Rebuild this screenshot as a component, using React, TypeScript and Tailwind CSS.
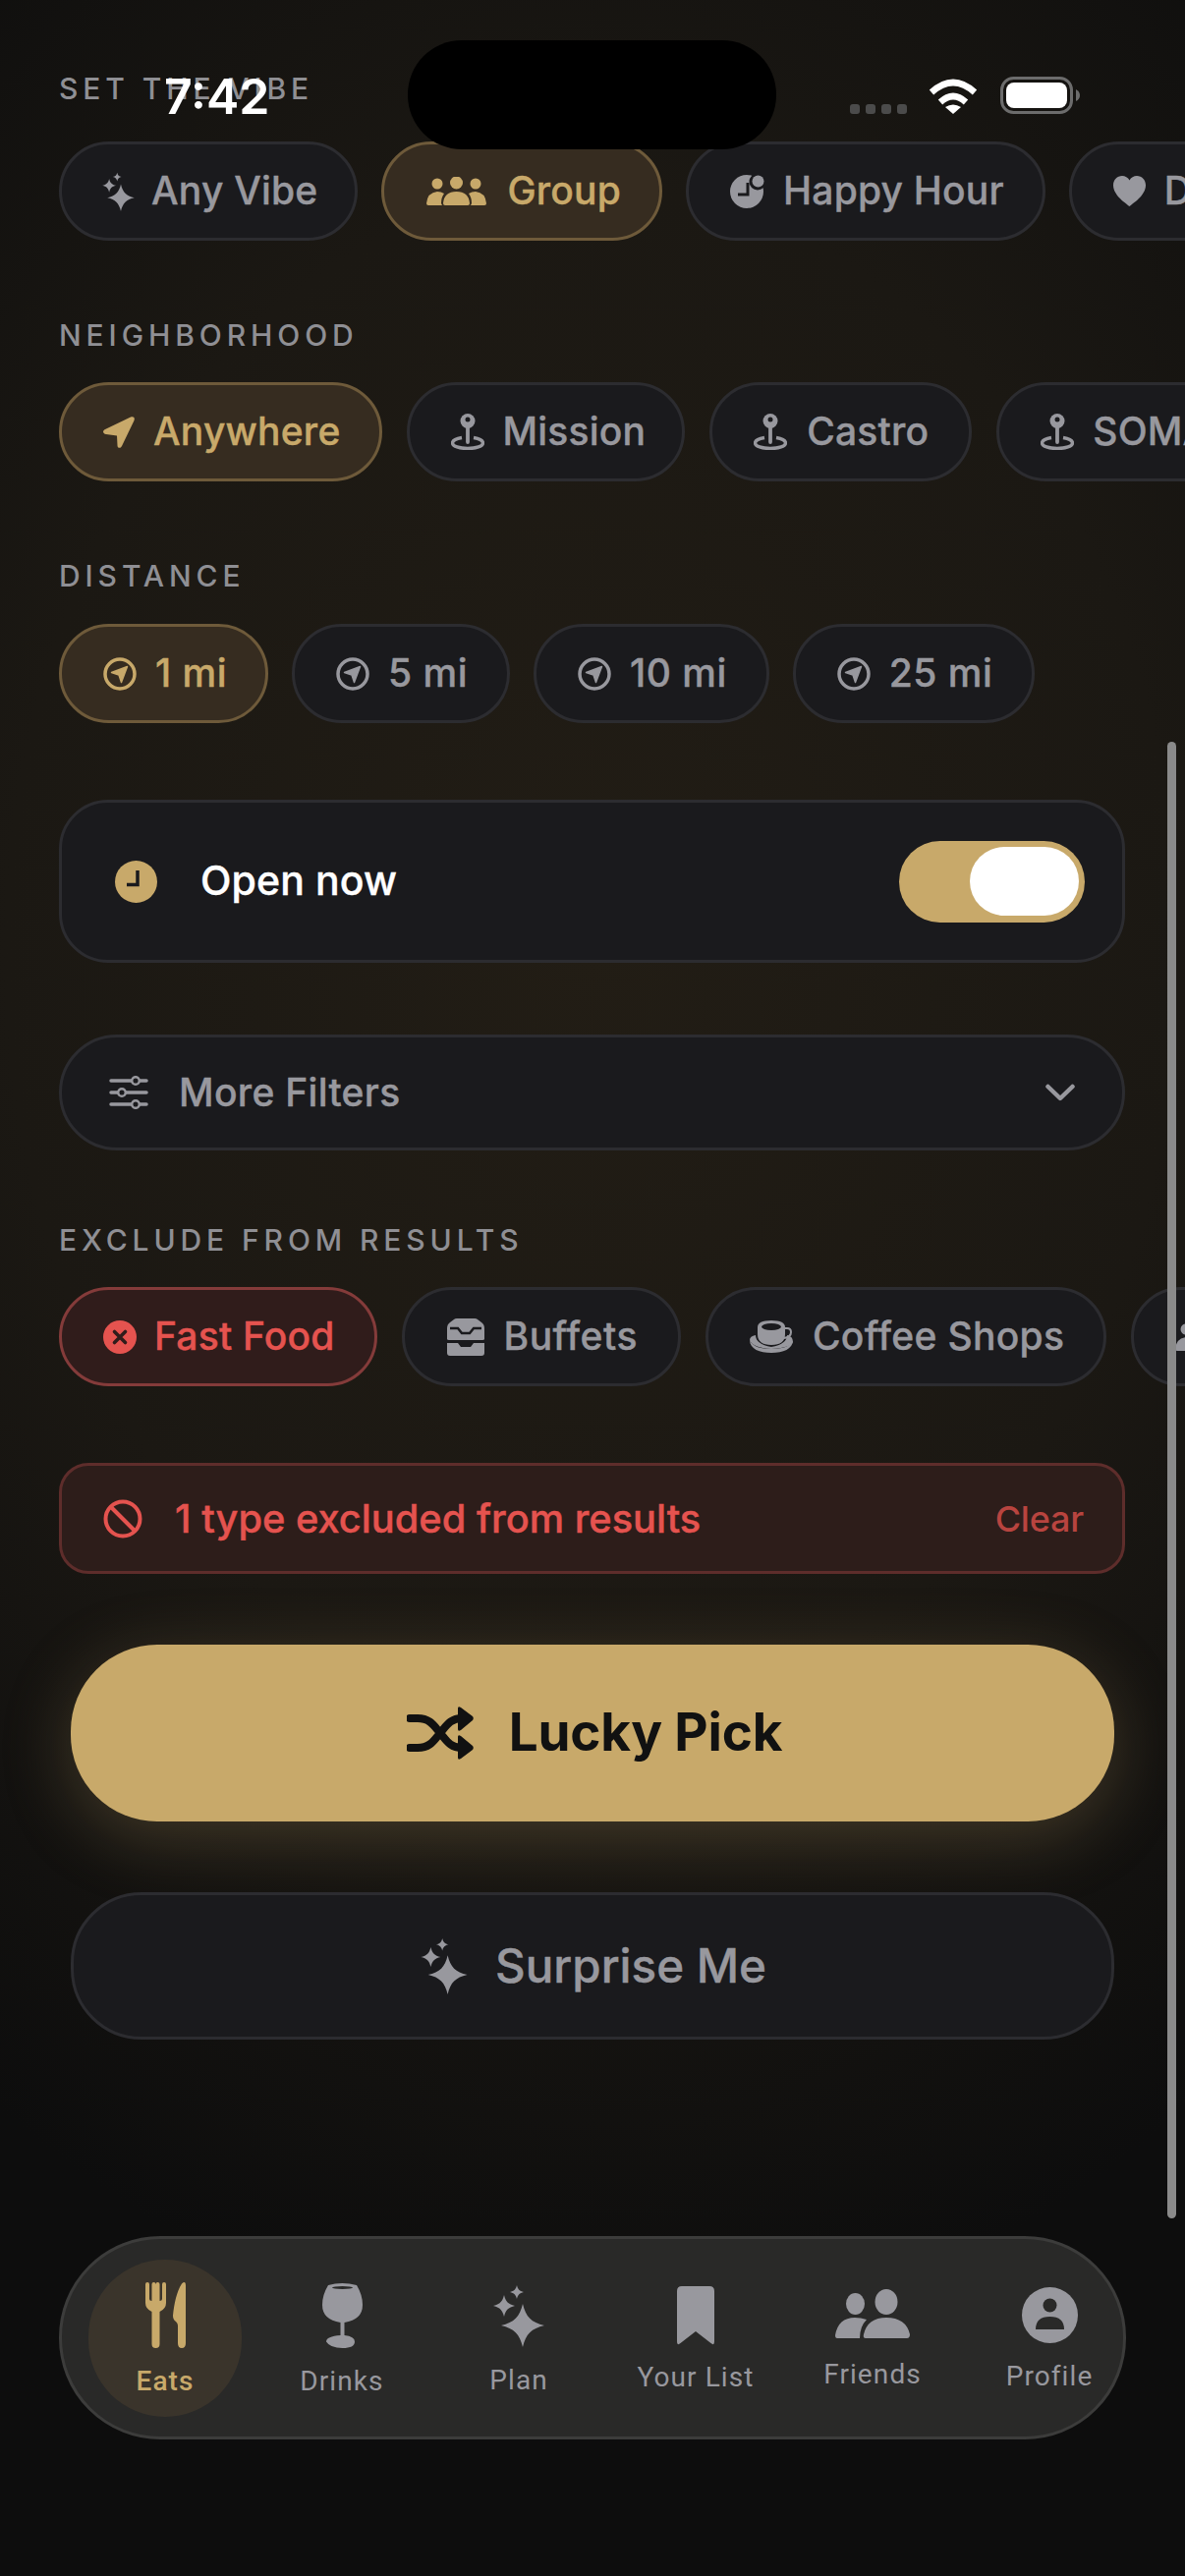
import React from "react";

const star = (cx: number, cy: number, r: number) =>
  `M${cx} ${cy - r}C${cx + r * 0.14} ${cy - r * 0.4} ${cx + r * 0.4} ${cy - r * 0.14} ${cx + r} ${cy}C${cx + r * 0.4} ${cy + r * 0.14} ${cx + r * 0.14} ${cy + r * 0.4} ${cx} ${cy + r}C${cx - r * 0.14} ${cy + r * 0.4} ${cx - r * 0.4} ${cy + r * 0.14} ${cx - r} ${cy}C${cx - r * 0.4} ${cy - r * 0.14} ${cx - r * 0.14} ${cy - r * 0.4} ${cx} ${cy - r}Z`;

type P = { className?: string };

const Sparkles = ({ className }: P) => (
  <svg viewBox="0 0 52 64" className={className} fill="currentColor">
    <path d={star(30, 42, 22)} />
    <path d={star(11, 22, 11)} />
    <path d={star(24, 8, 7)} />
  </svg>
);
const Group = ({ className }: P) => (
  <svg viewBox="0 0 61 29" className={className} fill="currentColor">
    <circle cx="11" cy="7" r="5.5" />
    <circle cx="30.5" cy="6" r="6.5" />
    <circle cx="50" cy="7" r="5.5" />
    <path d="M16 29H2Q0 29 0 27Q1 16 11 15Q15 15 18 17Q15 21 15 27Z" />
    <path d="M45 29H59Q61 29 61 27Q60 16 50 15Q46 15 43 17Q46 21 46 27Z" />
    <path d="M19 29Q17 29 17 27Q18 15 30.5 15Q43 15 44 27Q44 29 42 29Z" />
  </svg>
);
const HappyHour = ({ className }: P) => (
  <svg viewBox="0 0 36 34" className={className} fill="currentColor">
    <circle cx="17" cy="17" r="17" />
    <circle cx="28" cy="7" r="8.5" fill="#1a1a1d" />
    <circle cx="28.5" cy="6.5" r="6" />
    <path d="M18 8V20H8" fill="none" stroke="#1a1a1d" strokeWidth="3" />
  </svg>
);
const Heart = ({ className }: P) => (
  <svg viewBox="0 0 33 31" className={className} fill="currentColor">
    <path d="M16.5 31C13 28 0 20 0 9.5C0 4 4 0 9 0C12 0 15 1.500 16.500 4.500C18 1.500 21 0 24 0C29 0 33 4 33 9.500C33 20 20 28 16.500 31Z" />
  </svg>
);
const Arrow = ({ className }: P) => (
  <svg viewBox="0 0 32 32" className={className} fill="currentColor">
    <path d="M28 .5C31 -.5 32.500 1 31.500 4L19 30C17.500 33 14.500 32 14.500 29.500L14 19.500L3 18C-.5 17.500 -1 14.500 2 13Z" />
  </svg>
);
const Pin = ({ className }: P) => (
  <svg viewBox="0 0 34 37" className={className} fill="none">
    <path d="M11 24.500C5 25.500 1.500 27.500 1.500 30C1.500 33.200 8.500 35.500 17 35.500C25.500 35.500 32.500 33.200 32.500 30C32.500 27.500 29 25.500 23 24.500" stroke="currentColor" strokeWidth="3.400" />
    <path d="M17 10V29" stroke="currentColor" strokeWidth="3.800" strokeLinecap="round" />
    <circle cx="17" cy="7.500" r="7.500" fill="currentColor" />
    <circle cx="17" cy="6" r="2.500" fill="#1a1a1d" />
  </svg>
);
const CircleArrow = ({ className }: P) => (
  <svg viewBox="0 0 34 34" className={className} fill="none">
    <circle cx="17" cy="17" r="15" stroke="currentColor" strokeWidth="3.500" />
    <path d="M24.500 9.500L18.500 25.500L16 18L8.500 15.500Z" fill="currentColor" stroke="currentColor" strokeWidth="1.500" strokeLinejoin="round" />
  </svg>
);
const Clock = ({ className }: P) => (
  <svg viewBox="0 0 43 43" className={className}>
    <circle cx="21.500" cy="21.500" r="21.500" fill="currentColor" />
    <path d="M23 10V24.500H12" fill="none" stroke="#1a1a1d" strokeWidth="3.500" />
  </svg>
);
const Sliders = ({ className }: P) => (
  <svg viewBox="0 0 40 34" className={className} fill="none" stroke="currentColor">
    <path d="M2 5H38M2 17H38M2 29H38" strokeWidth="3.500" strokeLinecap="round" />
    <circle cx="27" cy="5" r="3.800" fill="#1a1a1d" strokeWidth="2.500" />
    <circle cx="13" cy="17" r="3.800" fill="#1a1a1d" strokeWidth="2.500" />
    <circle cx="27" cy="29" r="3.800" fill="#1a1a1d" strokeWidth="2.500" />
  </svg>
);
const Chevron = ({ className }: P) => (
  <svg viewBox="0 0 30 18" className={className} fill="none" stroke="currentColor" strokeWidth="4.500" strokeLinecap="round" strokeLinejoin="round">
    <path d="M2.500 3L15 15L27.500 3" />
  </svg>
);
const XCircle = ({ className }: P) => (
  <svg viewBox="0 0 34 34" className={className}>
    <circle cx="17" cy="17" r="17" fill="currentColor" />
    <path d="M11.500 11.500L22.500 22.500M22.500 11.500L11.500 22.500" stroke="#301c1b" strokeWidth="3.600" strokeLinecap="round" />
  </svg>
);
const Buffet = ({ className }: P) => (
  <svg viewBox="0 0 38 38" className={className} fill="currentColor">
    <path d="M0 21V10Q0 6 3 4L7 1Q8 0 10 0H28Q30 0 31 1L35 4Q38 6 38 10V21Q38 22 36 22H2Q0 22 0 21Z" />
    <path d="M3 10H11L15 15H23L27 10H35" fill="none" stroke="#1a1a1d" strokeWidth="2.500" />
    <path d="M0 25H11L14 29H24L27 25H38V35Q38 38 35 38H3Q0 38 0 35Z" />
  </svg>
);
const Coffee = ({ className }: P) => (
  <svg viewBox="0 0 44 33" className={className} fill="currentColor">
    <path d="M0 20C3 27 12 29 22 29C32 29 41 27 44 20C44 29 34 33 22 33C10 33 0 29 0 20Z" />
    <path d="M0 20Q0 16 6 15Q6 24 22 27Q38 24 38 15Q44 16 44 22Q41 28 22 29Q3 28 0 20Z" />
    <path d="M8 7Q8 0 22 0Q36 0 36 7V14Q36 25 22 25Q8 25 8 14Z" />
    <ellipse cx="22" cy="6.500" rx="10" ry="3.500" fill="#1a1a1d" />
    <path d="M36 8H38Q42 8 42 12Q42 17 35 18" fill="none" stroke="currentColor" strokeWidth="2" />
  </svg>
);
const Ban = ({ className }: P) => (
  <svg viewBox="0 0 40 40" className={className} fill="none" stroke="currentColor" strokeWidth="4">
    <circle cx="20" cy="20" r="17.500" />
    <path d="M8 8L32 32" />
  </svg>
);
const Shuffle = ({ className }: P) => (
  <svg viewBox="0 0 68 54" className={className}>
    <path d="M3 12H11C24 12 28 20 34 27C40 34 44 42 56 42M3 42H11C24 42 28 34 34 27C40 20 44 12 56 12" fill="none" stroke="currentColor" strokeWidth="8" strokeLinecap="round" />
    <path d="M52 2Q52 -1 55 1L67 10Q68.500 12 67 14L55 24Q52 26 52 23ZM52 31Q52 28 55 30L67 40Q68.500 42 67 44L55 53Q52 55 52 52Z" fill="currentColor" />
  </svg>
);
const ForkKnife = ({ className }: P) => (
  <svg viewBox="0 0 41 67" className={className} fill="currentColor">
    <path d="M0 2Q0 0 2 0T4 2V17Q4 19 6.500 19V2Q6.500 0 8.500 0T10.500 2V19Q10.500 19 10.500 19V2Q10.500 0 12.500 0T14.500 2V19Q17 19 17 17V2Q17 0 19 0T21 2V21Q21 27 14.500 30V63Q14.500 67 10.500 67T6.500 63V30Q0 27 0 21Z" />
    <path d="M41 3V62Q41 67 37 67T33 62V44Q33 42 31 40Q28 38 28 34C29 22 32 9 37 1.500Q41 -2 41 3Z" />
  </svg>
);
const Wine = ({ className }: P) => (
  <svg viewBox="0 0 41 67" className={className} fill="currentColor">
    <path d="M6 3Q20 -1 35 3Q41 13 41 23Q41 38 22.500 41V54Q33 55 33 60.500Q33 67 20.500 67Q8 67 4 60.500Q4 55 18.500 54V41Q0 38 0 23Q0 13 6 3Z" />
    <ellipse cx="20.500" cy="5.500" rx="10.500" ry="1.500" fill="#292928" />
  </svg>
);
const Bookmark = ({ className }: P) => (
  <svg viewBox="0 0 38 60" className={className} fill="currentColor">
    <path d="M5 0H33Q38 0 38 5V56Q38 61 34.500 58L19 46L3.500 58Q0 61 0 56V5Q0 0 5 0Z" />
  </svg>
);
const Friends = ({ className }: P) => (
  <svg viewBox="0 0 76 50" className={className} fill="currentColor">
    <ellipse cx="20.500" cy="15" rx="9.500" ry="11" />
    <ellipse cx="52" cy="13" rx="11.500" ry="13" />
    <path d="M2 50Q0 50 0 47Q3 29 20 29Q26 29 32 31Q25 38 25 50Z" />
    <path d="M31 50Q28 50 29 46Q33 29 52 29Q72 29 76 46Q76 50 73 50Z" />
  </svg>
);
const Profile = ({ className }: P) => (
  <svg viewBox="0 0 57 57" className={className}>
    <circle cx="28.500" cy="28.500" r="28.500" fill="currentColor" />
    <circle cx="28.500" cy="18.500" r="7" fill="#292928" />
    <path d="M14 43Q14 30 28.500 30Q43 30 43 43Z" fill="#292928" />
  </svg>
);

type Tone = "idle" | "gold" | "red";
const tones: Record<Tone, string> = {
  idle: "bg-[#1a1a1d] border-[#2c2c30] text-[#98989e]",
  gold: "bg-[#362c20] border-[#6e5a3a] text-[#c8a96a]",
  red: "bg-[#301c1b] border-[#843b3a] text-[#e5534f]",
};

function Chip({
  icon,
  label,
  tone = "idle",
  extra = "pl-[42px] pr-[40px] gap-[19px]",
  track = "tracking-[0.2px]",
}: {
  icon: React.ReactNode;
  label: string;
  tone?: Tone;
  extra?: string;
  track?: string;
}) {
  return (
    <div className={`flex h-[101px] shrink-0 items-center rounded-full border-[3px] text-[39px] font-medium [-webkit-text-stroke:0.4px_currentColor] ${track} ${extra} ${tones[tone]}`}>
      {icon}
      <span className="whitespace-nowrap">{label}</span>
    </div>
  );
}

function Label({ children, className = "" }: { children: React.ReactNode; className?: string }) {
  return <div className={`h-[30px] text-[30px] font-medium uppercase leading-[30px] tracking-[4.9px] text-[#8f8f94] ${className}`}>{children}</div>;
}

function Tab({ icon, label, active, pt, mt }: { icon: React.ReactNode; label: string; active?: boolean; pt: string; mt: string }) {
  return (
    <div className={`relative flex flex-col items-center ${pt} ${active ? "text-[#c8a96a]" : "text-[#98989e]"}`}>
      {active && <div className="absolute left-[12px] top-[21px] h-[160px] w-[156px] rounded-full bg-[#3a342b]" />}
      <div className="relative">{icon}</div>
      <div className={`relative whitespace-nowrap text-[28px] leading-[32px] tracking-[1.1px] [font-family:Roboto,sans-serif] ${active ? "font-medium" : "font-normal"} ${mt}`}>{label}</div>
    </div>
  );
}

export default function App() {
  const num = "tracking-[0.5px]";
  return (
    <div className="relative h-[2622px] w-[1206px] overflow-hidden bg-[#0d0d0d] bg-[radial-gradient(ellipse_90%_54%_at_50%_37%,#221d15_0%,#1b1813_55%,#0d0d0d_100%)] pt-[75px] [font-family:Inter,sans-serif]">
      <div className="pl-[60px]">
        <Label>Set the vibe</Label>
        <div className="mt-[39px] flex gap-[24px]">
          <Chip extra="pl-[41px] pr-[38px] gap-[17px]" icon={<Sparkles className="h-[40px] w-[33px]" />} label="Any Vibe" />
          <Chip extra="pl-[43px] pr-[39px] gap-[21px]" tone="gold" icon={<Group className="h-[29px] w-[61px]" />} label="Group" />
          <Chip extra="pl-[42px] pr-[39px] gap-[18px]" icon={<HappyHour className="h-[34px] w-[36px]" />} label="Happy Hour" />
          <Chip icon={<Heart className="h-[31px] w-[33px]" />} label="Date Night" />
        </div>

        <Label className="mt-[81px]">Neighborhood</Label>
        <div className="mt-[33px] flex gap-[25px]">
          <Chip extra="pl-[42px] pr-[39px] gap-[19px]" tone="gold" icon={<Arrow className="h-[32px] w-[32px]" />} label="Anywhere" />
          <Chip extra="pl-[42px] pr-[37px] gap-[19px]" icon={<Pin className="h-[37px] w-[34px]" />} label="Mission" />
          <Chip extra="pl-[42px] pr-[41px] gap-[20px]" icon={<Pin className="h-[37px] w-[34px]" />} label="Castro" />
          <Chip icon={<Pin className="h-[37px] w-[34px]" />} label="SOMA" />
        </div>

        <Label className="mt-[81px]">Distance</Label>
        <div className="mt-[34px] flex gap-[24px]">
          <Chip extra="pl-[42px] pr-[39px] gap-[19px]" track={num} tone="gold" icon={<CircleArrow className="h-[34px] w-[34px]" />} label="1 mi" />
          <Chip track={num} icon={<CircleArrow className="h-[34px] w-[34px]" />} label="5 mi" />
          <Chip track={num} icon={<CircleArrow className="h-[34px] w-[34px]" />} label="10 mi" />
          <Chip track={num} icon={<CircleArrow className="h-[34px] w-[34px]" />} label="25 mi" />
        </div>

        <div className="mt-[78px] flex h-[166px] w-[1085px] items-center rounded-[50px] border-[3px] border-[#2c2c30] bg-[#1a1a1d] pl-[54px] pr-[38px]">
          <Clock className="h-[43px] w-[43px] text-[#c8a96a]" />
          <span className="ml-[44px] text-[41px] font-medium tracking-[0.1px] text-white [-webkit-text-stroke:0.4px_currentColor]">Open now</span>
          <div className="ml-auto flex h-[83px] w-[189px] items-center justify-end rounded-[42px] bg-[#c8a96a] pr-[6px]">
            <div className="h-[70px] w-[111px] rounded-[35px] bg-white" />
          </div>
        </div>

        <div className="mt-[73px] flex h-[118px] w-[1085px] items-center rounded-[59px] border-[3px] border-[#2c2c30] bg-[#1a1a1d] pl-[48px] pr-[48px] text-[#98989e]">
          <Sliders className="h-[34px] w-[40px]" />
          <span className="ml-[31px] text-[39px] font-medium tracking-[0.3px] [-webkit-text-stroke:0.4px_currentColor]">More Filters</span>
          <Chevron className="ml-auto h-[18px] w-[30px]" />
        </div>

        <Label className="mt-[76px]">Exclude from results</Label>
        <div className="mt-[33px] flex gap-[25px]">
          <Chip extra="pl-[42px] pr-[40px] gap-[18px]" tone="red" icon={<XCircle className="h-[34px] w-[34px]" />} label="Fast Food" />
          <Chip extra="pl-[43px] pr-[41px] gap-[20px]" track="tracking-[0.5px]" icon={<Buffet className="h-[38px] w-[38px]" />} label="Buffets" />
          <Chip extra="pl-[42px] pr-[40px] gap-[20px]" track="tracking-[0.3px]" icon={<Coffee className="h-[33px] w-[44px]" />} label="Coffee Shops" />
          <Chip icon={<Group className="h-[29px] w-[61px]" />} label="Bars" />
        </div>

        <div className="mt-[78px] flex h-[113px] w-[1085px] items-center rounded-[30px] border-[3px] border-[#5e2d2b] bg-[#2d1d1a] pl-[42px] pr-[39px]">
          <Ban className="h-[40px] w-[40px] text-[#e5534f]" />
          <span className="ml-[33px] text-[39.800px] font-medium text-[#e5534f] [-webkit-text-stroke:0.4px_currentColor]">1 type excluded from results</span>
          <span className="ml-auto text-[36px] font-medium tracking-[-0.2px] text-[#b8443f]">Clear</span>
        </div>
      </div>

      <div className="mt-[72px] flex flex-col gap-[72px] px-[72px]">
        <div className="flex h-[180px] w-[1062px] items-center justify-center gap-[36px] rounded-[88px] bg-[#c8a96a] pl-[4px] text-[#111111] shadow-[0_16px_70px_rgba(200,169,106,0.25)]">
          <Shuffle className="h-[54px] w-[68px]" />
          <span className="text-[53px] font-bold tracking-[-0.2px]">Lucky Pick</span>
        </div>
        <div className="flex h-[150px] w-[1062px] items-center justify-center gap-[28px] rounded-[72px] border-[3px] border-[#2c2c30] bg-[#1a1a1d] pl-[2px] text-[#98989e]">
          <Sparkles className="h-[58px] w-[48px]" />
          <span className="text-[47.500px] font-medium [-webkit-text-stroke:0.4px_currentColor]">Surprise Me</span>
        </div>
      </div>

      <div className="ml-[60px] mt-[200px] h-[207px] w-[1086px] rounded-[103px] border-[3px] border-[#3c3c3b] bg-[#292928] pl-[15px]">
        <div className="grid grid-cols-[repeat(6,180px)]">
          <Tab active pt="pt-[44px]" mt="mt-[18px]" label="Eats" icon={<ForkKnife className="h-[67px] w-[41px]" />} />
          <Tab pt="pt-[44px]" mt="mt-[18px]" label="Drinks" icon={<Wine className="h-[67px] w-[41px]" />} />
          <Tab pt="pt-[46px]" mt="mt-[18px]" label="Plan" icon={<Sparkles className="h-[64px] w-[52px]" />} />
          <Tab pt="pt-[48px]" mt="mt-[17px]" label="Your List" icon={<Bookmark className="h-[60px] w-[38px]" />} />
          <Tab pt="pt-[51px]" mt="mt-[21px]" label="Friends" icon={<Friends className="h-[50px] w-[76px]" />} />
          <Tab pt="pt-[49px]" mt="mt-[18px]" label="Profile" icon={<Profile className="h-[57px] w-[57px]" />} />
        </div>
      </div>

      {/* status bar, floats over the scrolled content */}
      <div className="absolute left-[167px] top-[68px] text-[50px] font-semibold leading-[60px] text-white">7:42</div>
      <div className="absolute left-[415px] top-[41px] h-[111px] w-[375px] rounded-[55px] bg-black" />
      <div className="absolute left-[865px] top-[106px] flex gap-[6px]">
        <div className="h-[10px] w-[10px] rounded-[3px] bg-[#4b4b4b]" />
        <div className="h-[10px] w-[10px] rounded-[3px] bg-[#4b4b4b]" />
        <div className="h-[10px] w-[10px] rounded-[3px] bg-[#4b4b4b]" />
        <div className="h-[10px] w-[10px] rounded-[3px] bg-[#4b4b4b]" />
      </div>
      <svg viewBox="0 0 50 36" className="absolute left-[945px] top-[80px] h-[36px] w-[50px]" fill="none" stroke="#ffffff" strokeWidth="6.500">
        <path d="M3 14Q25 -6 47 14" />
        <path d="M12 24Q25 12 38 24" />
        <path d="M25 36L17 29Q25 24 33 29Z" fill="#ffffff" stroke="none" />
      </svg>
      <svg viewBox="0 0 82 38" className="absolute left-[1018px] top-[78px] h-[38px] w-[82px]">
        <rect x="1.500" y="1.500" width="71" height="35" rx="12" fill="none" stroke="#6c6c6c" strokeWidth="3" />
        <rect x="6" y="6" width="62" height="26" rx="8" fill="#ffffff" />
        <path d="M77 13Q81 15 81 19T77 25Z" fill="#6c6c6c" />
      </svg>

      {/* scroll indicator */}
      <div className="absolute left-[1188px] top-[755px] h-[1503px] w-[9px] rounded-full bg-[#8a8a8a]" />
    </div>
  );
}
